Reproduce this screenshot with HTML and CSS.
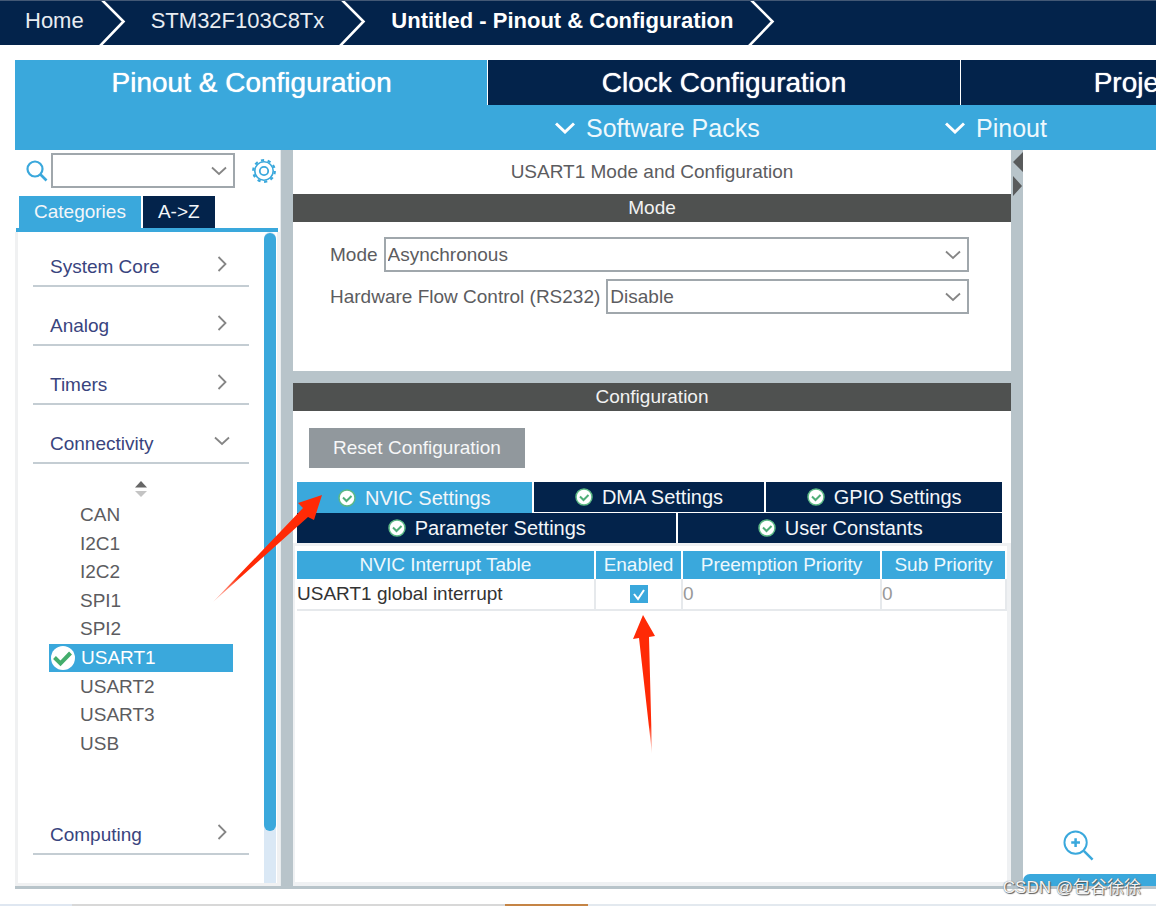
FILE: index.html
```html
<!DOCTYPE html>
<html lang="en">
<head>
<meta charset="utf-8">
<title>Untitled - Pinout &amp; Configuration</title>
<link rel="stylesheet" href="styles.css">
</head>
<body>
<svg class="symbols" aria-hidden="true">
  <symbol id="down" viewBox="0 0 16 10"><path d="M1 1.500 8 8l7-6.500" fill="none" stroke="currentColor" stroke-width="1.800"/></symbol>
  <symbol id="right" viewBox="0 0 10 16"><path d="M1.500 1 8.500 8l-7 7" fill="none" stroke="currentColor" stroke-width="1.800"/></symbol>
  <symbol id="crumb" viewBox="0 0 27 45"><path d="M3-1 24.500 20.500 0 46" fill="none" stroke="#fff" stroke-width="2.600"/></symbol>
  <symbol id="ok" viewBox="0 0 18 18"><circle cx="9" cy="9" r="8" fill="#fff" stroke="#5cb985" stroke-width="1.500"/><path d="m5 8.500 3.500 3.500L13.500 7" fill="none" stroke="#4fae78" stroke-width="2"/></symbol>
</svg>

<nav class="crumbs" aria-label="Breadcrumb">
  <a href="#">Home</a><svg><use href="#crumb"/></svg>
  <a href="#">STM32F103C8Tx</a><svg><use href="#crumb"/></svg>
  <a href="#" class="current">Untitled - Pinout &amp; Configuration</a><svg><use href="#crumb"/></svg>
</nav>

<main class="workspace">
  <div class="main-tabs">
    <button class="active">Pinout &amp; Configuration</button>
    <button>Clock Configuration</button>
    <button>Project Manager</button>
  </div>
  <div class="sub-menu">
    <button><svg viewBox="0 0 20 12"><path d="m1 1.500 9 8.500 9-8.500" fill="none" stroke="#fff" stroke-width="3"/></svg>Software Packs</button>
    <button><svg viewBox="0 0 20 12"><path d="m1 1.500 9 8.500 9-8.500" fill="none" stroke="#fff" stroke-width="3"/></svg>Pinout</button>
  </div>

  <div class="columns">
    <aside class="sidebar">
      <div class="search">
        <svg class="lens" viewBox="0 0 22 22"><circle cx="9" cy="9" r="7.500" fill="none" stroke="#3aa8dc" stroke-width="2.200"/><path d="m14.500 14.500 6 6" stroke="#3aa8dc" stroke-width="2.600"/></svg>
        <span class="combo"><select aria-label="Search peripheral"><option></option></select><svg><use href="#down"/></svg></span>
        <button class="gear" aria-label="Settings"><svg viewBox="0 0 24 24" fill="none" stroke="#3aa8dc"><circle cx="12" cy="12" r="9.200" stroke-width="1.600"/><circle cx="12" cy="12" r="10.800" stroke-width="2.200" stroke-dasharray="3.200 3.585"/><circle cx="12" cy="12" r="4.200" stroke-width="1.800"/></svg></button>
      </div>
      <div class="side-tabs"><button class="active">Categories</button><button>A-&gt;Z</button></div>
      <div class="side-body">
        <div class="categories">
          <button class="category">System Core<svg class="r"><use href="#right"/></svg></button>
          <button class="category">Analog<svg class="r"><use href="#right"/></svg></button>
          <button class="category">Timers<svg class="r"><use href="#right"/></svg></button>
          <button class="category">Connectivity<svg class="d"><use href="#down"/></svg></button>
          <div class="peripherals">
            <svg class="sort" viewBox="0 0 12 16"><path d="M0 6.500 6 0l6 6.500z" fill="#666"/><path d="M0 10h12l-6 6z" fill="#c4c4c4"/></svg>
            <ul>
              <li>CAN</li><li>I2C1</li><li>I2C2</li><li>SPI1</li><li>SPI2</li>
              <li class="selected"><svg viewBox="0 0 24 24"><circle cx="12" cy="12" r="12" fill="#fff"/><path d="m3.500 11.500 6 6L19.500 7" fill="none" stroke="#43ad6c" stroke-width="4"/></svg>USART1</li>
              <li>USART2</li><li>USART3</li><li>USB</li>
            </ul>
          </div>
          <button class="category">Computing<svg class="r"><use href="#right"/></svg></button>
        </div>
        <div class="scroll"><div class="thumb"></div></div>
      </div>
    </aside>

    <div class="splitter"></div>

    <section class="center">
      <h1>USART1 Mode and Configuration</h1>
      <h2>Mode</h2>
      <div class="mode">
        <div class="field"><label for="mode">Mode</label><span class="combo"><select id="mode"><option>Asynchronous</option></select><svg><use href="#down"/></svg></span></div>
        <div class="field"><label for="flow">Hardware Flow Control (RS232)</label><span class="combo"><select id="flow"><option>Disable</option></select><svg><use href="#down"/></svg></span></div>
      </div>
      <div class="hsplit"></div>
      <h2>Configuration</h2>
      <div class="config">
        <button class="reset">Reset Configuration</button>
        <div class="tabs">
          <div class="tab-row three">
            <button class="active"><svg><use href="#ok"/></svg>NVIC Settings</button>
            <button><svg><use href="#ok"/></svg>DMA Settings</button>
            <button><svg><use href="#ok"/></svg>GPIO Settings</button>
          </div>
          <div class="tab-row two">
            <button><svg><use href="#ok"/></svg>Parameter Settings</button>
            <button><svg><use href="#ok"/></svg>User Constants</button>
          </div>
        </div>
        <div class="table-pane">
          <table>
            <thead><tr><th class="c1">NVIC Interrupt Table</th><th class="c2">Enabled</th><th class="c3">Preemption Priority</th><th>Sub Priority</th></tr></thead>
            <tbody><tr><td>USART1 global interrupt</td><td class="check"><input type="checkbox" checked aria-label="Enable USART1 global interrupt"></td><td class="off">0</td><td class="off">0</td></tr></tbody>
          </table>
        </div>
      </div>
    </section>

    <div class="splitter">
      <svg viewBox="0 0 12 48"><path d="M12 2v20L2 12zM2 26v20l9-10z" fill="#595b5c"/></svg>
    </div>

    <section class="view">
      <button class="zoom" aria-label="Zoom in"><svg viewBox="0 0 32 32" fill="none" stroke="#3aa8dc"><circle cx="13" cy="13" r="11.500" stroke-width="2"/><path d="M13 8.500v9M8.500 13h9" stroke-width="2.600"/><path d="m21.500 21.500 9 9" stroke-width="2.600"/></svg></button>
      <div class="view-bar"></div>
    </section>
  </div>
</main>
<div class="desktop-edge"></div>

<svg class="arrows" viewBox="0 0 1156 906" aria-hidden="true">
  <defs>
    <linearGradient id="fadeA" gradientUnits="userSpaceOnUse" x1="213" y1="602" x2="240" y2="577"><stop offset="0" stop-color="#ff2a06" stop-opacity=".2"/><stop offset="1" stop-color="#ff2a06"/></linearGradient>
    <linearGradient id="fadeB" gradientUnits="userSpaceOnUse" x1="652" y1="754" x2="651" y2="725"><stop offset="0" stop-color="#ff2a06" stop-opacity=".1"/><stop offset="1" stop-color="#ff2a06"/></linearGradient>
  </defs>
  <path fill="url(#fadeA)" d="M322 495 298 503l5 5-90 94 95-85 6 3z"/>
  <path fill="url(#fadeB)" d="m643 615-10 24 6-1 13 116-3-117 6-1z"/>
</svg>
<div class="watermark">CSDN @包谷徐徐</div>
</body>
</html>
```
FILE: styles.css
```css
* { box-sizing: border-box; }
html, body { margin: 0; }
body {
  position: relative;
  min-height: 100vh;
  display: flex;
  flex-direction: column;
  overflow-x: hidden;
  background: #fff;
  color: #5c5c60;
  font: 19px/24px "Liberation Sans", Arial, sans-serif;
}
button, select { font: inherit; color: inherit; border: 0; border-radius: 0; margin: 0; padding: 0; background: none; }
svg { display: block; flex: none; }
.symbols { position: absolute; width: 0; height: 0; }

.crumbs {
  display: flex;
  align-items: center;
  height: 45px;
  padding-left: 25px;
  overflow: hidden;
  background: #03234b;
  border-top: 1px solid #435875;
  font-size: 22px;
  white-space: nowrap;
}
.crumbs a { color: #e8ecf1; text-decoration: none; padding-bottom: 4px; }
.crumbs .current { color: #fff; font-weight: bold; }
.crumbs svg { width: 27px; height: 45px; margin: 0 25px 0 15px; }

.workspace {
  flex: 1;
  display: flex;
  flex-direction: column;
  margin: 15px 0 15px 15px;
  border-bottom: 3px solid #b8c4ca;
}
.main-tabs { display: flex; overflow: hidden; background: #3aa8dc; }
.main-tabs button {
  flex: 0 0 41.4%;
  height: 45px;
  border-left: 1px solid #fff;
  background: #03234b;
  color: #fff;
  font-size: 28px;
  text-shadow: 0 0 1px #fff;
}
.main-tabs .active, .side-tabs .active, .tab-row .active { background: #3aa8dc; border-left-color: #3aa8dc; }
.sub-menu { display: flex; height: 45px; padding-left: 540px; background: #3aa8dc; color: #eef8fd; font-size: 25px; }
.sub-menu button { flex: 0 0 390px; display: flex; align-items: center; gap: 11px; }
.sub-menu svg { width: 20px; height: 12px; }

.columns { flex: 1; display: grid; grid-template-columns: 266px 12px minmax(0, 718px) 12px minmax(0, 1fr); }
.splitter { background: #b8c4ca; }
.splitter svg { width: 12px; height: 48px; }

.combo { display: grid; flex: 1; }
.combo select {
  grid-area: 1 / 1;
  width: 100%;
  height: 35px;
  padding-left: 2px;
  appearance: none;
  background: #fff;
  border: 2px solid #a0a7ac;
}
.combo svg { grid-area: 1 / 1; place-self: center end; width: 16px; height: 10px; margin-right: 8px; color: #858585; pointer-events: none; }

.sidebar { display: flex; flex-direction: column; border-right: 1px solid #e8ecee; }
.search { display: flex; align-items: center; height: 41px; padding: 0 4px 0 11px; }
.lens { width: 22px; height: 22px; margin-right: 3px; }
.gear { margin-left: 17px; }
.gear svg { width: 24px; height: 24px; }
.side-tabs { display: flex; gap: 2px; margin: 5px 2px 0 1px; padding-left: 3px; border-bottom: 4px solid #3aa8dc; }
.side-tabs button { height: 32px; padding: 0 15px; background: #03234b; color: #f3f6f9; }
.side-body { flex: 1; display: flex; border: 3px solid #f0f1f2; border-top: 0; }
.side-body .categories { flex: 1; display: flex; flex-direction: column; padding: 23px 15px 28px; }
.category {
  display: flex;
  align-items: flex-start;
  justify-content: space-between;
  padding: 0 18px 6px 17px;
  border-bottom: 2px solid #c4cdd3;
  color: #39447e;
}
.category + .category { margin-top: 27px; }
.category svg { height: 16px; margin-top: 1px; color: #858585; }
.category .r { width: 10px; margin-right: 4px; }
.category .d { width: 16px; margin-right: 1px; }
.peripherals { padding: 17px 16px 65px; }
.sort { width: 12px; height: 16px; margin: 0 auto 4px; }
.peripherals ul { display: grid; grid-auto-rows: 1fr; min-height: 257px; margin: 0; padding: 0; list-style: none; }
.peripherals li { display: flex; align-items: center; padding-left: 31px; }
.peripherals .selected { gap: 6px; padding-left: 2px; background: #3aa8dc; color: #fff; }
.selected svg { width: 24px; height: 24px; }
.scroll { width: 12px; margin-right: 1px; padding-top: 1px; background: #dae8f5; border-radius: 6px 6px 0 0; }
.thumb { height: 92%; border-radius: 6px; background: #3aa8dc; }

.center { display: flex; flex-direction: column; }
h1, h2 { margin: 0; font-size: 19px; font-weight: normal; text-align: center; }
h1 { line-height: 44px; }
h2 { line-height: 28px; background: #4f5150; color: #f2f2f2; }
.mode { display: grid; gap: 7px; align-content: start; min-height: 149px; padding: 15px 42px 0 37px; }
.field { display: flex; align-items: center; gap: 6px; }
.hsplit { height: 12px; background: #b8c4ca; }
.config { flex: 1; display: flex; flex-direction: column; align-items: stretch; }
.reset { align-self: flex-start; height: 40px; margin: 17px 0 14px 16px; padding: 0 24px; background: #91989d; color: #f6f7f8; }
.tabs { display: grid; padding: 0 9px 0 4px; font-size: 20px; }
.tab-row { display: grid; gap: 2px; }
.three { grid-template-columns: 235fr 231fr 236fr; }
.two { grid-template-columns: 380fr 324fr; }
.tab-row button { display: flex; align-items: center; justify-content: center; gap: 9px; height: 30px; background: #03234b; color: #f3f6f9; }
.tab-row .active { height: 31px; }
.tab-row svg { width: 18px; height: 18px; }
.table-pane { flex: 1; padding: 5px 0 0; border: solid #eff1f3; border-width: 3px 4px 4px 2px; }
table { width: 100%; border-collapse: separate; border-spacing: 2px 0; table-layout: fixed; }
.c1 { width: 297px; }
.c2 { width: 85px; }
.c3 { width: 197px; }
th { height: 28px; padding: 0; background: #3aa8dc; color: #eef8fd; font-weight: normal; white-space: nowrap; }
td { height: 32px; padding: 0; color: #333; border-bottom: 2px solid #e6e9ec; box-shadow: 2px 0 0 #e6e9ec; white-space: nowrap; }
td.off { color: #999; }
.check { text-align: center; }
.check input {
  appearance: none;
  display: block;
  width: 18px;
  height: 18px;
  margin: 0 auto;
  background: #3aa8dc url("data:image/svg+xml,%3Csvg xmlns='http://www.w3.org/2000/svg' viewBox='0 0 18 18'%3E%3Cpath d='m4 9 4 5 6-9' fill='none' stroke='white' stroke-width='2'/%3E%3C/svg%3E");
}

.view { display: flex; flex-direction: column; justify-content: flex-end; }
.zoom { align-self: flex-start; margin: 0 0 13px 40px; }
.zoom svg { width: 31px; height: 31px; }
.view-bar { height: 12px; border-top-left-radius: 7px; background: #3aa8dc; }

.desktop-edge { height: 2px; background: linear-gradient(90deg, #dfe7f1 72px, #d8d8d8 72px 505px, #c58445 505px 588px, #e3e9ef 588px); }
.arrows { position: absolute; left: 0; top: 0; width: 1156px; height: 906px; pointer-events: none; }
.watermark {
  position: absolute;
  right: 15px;
  bottom: 6px;
  font: 17px/24px "Liberation Sans", "Noto Sans CJK SC", sans-serif;
  color: #f4f4f4;
  text-shadow: 1px 1px 1px #555, 0 0 1px #666;
}
```
